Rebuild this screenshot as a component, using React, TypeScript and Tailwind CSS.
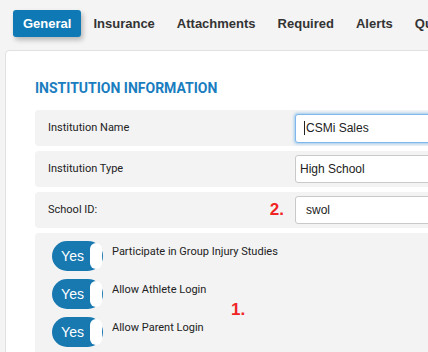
const tabs = ['Insurance', 'Attachments', 'Required', 'Alerts', 'Quick'];

const toggles = [
  'Participate in Group Injury Studies',
  'Allow Athlete Login',
  'Allow Parent Login',
];

function YesToggle() {
  return (
    <div className="relative flex h-[30px] w-[51px] shrink-0 items-center rounded-full bg-[#1878b0]">
      <span className="w-[41px] text-center font-['Liberation_Sans',sans-serif] text-[14px] text-white">
        Yes
      </span>
      <span className="absolute right-[1px] top-[2px] h-[26px] w-[12px] rounded-full bg-white" />
    </div>
  );
}

function FieldRow({
  label,
  children,
  marker,
}: {
  label: string;
  children: React.ReactNode;
  marker?: string;
}) {
  return (
    <div className="flex h-[36px] items-center rounded-[4px] bg-[#f3f3f3]">
      <div className="flex w-[260px] shrink-0 items-center justify-between pl-[13px] pr-[11px]">
        <span className="text-[11px] text-[#222]">{label}</span>
        {marker ? (
          <span className="font-['Liberation_Sans',sans-serif] text-[17px] font-bold text-[#f02424]">
            {marker}
          </span>
        ) : null}
      </div>
      {children}
    </div>
  );
}

export default function App() {
  return (
    <div className="h-[352px] w-[428px] overflow-hidden bg-[#f4f4f4] font-['Roboto',sans-serif]">
      <div className="flex h-[50px] items-start whitespace-nowrap pl-[13px] pt-[10px] font-['Liberation_Sans',sans-serif] text-[13px] font-bold">
        <div className="mr-px flex h-[27px] items-center rounded-[3px] bg-[#0e79b5] px-[10px] text-white shadow-[2px_3px_5px_rgba(0,0,0,0.25)]">
          General
        </div>
        {tabs.map((tab) => (
          <div key={tab} className="flex h-[27px] items-center px-[11px] text-[#333]">
            {tab}
          </div>
        ))}
      </div>

      <div className="ml-[5px] w-[460px] rounded-[4px] border border-[#e1e1e1] bg-white pb-[40px] pl-[29px] pt-[29px]">
        <h2 className="mb-[14px] text-[14px] font-bold uppercase leading-[16px] text-[#1a7dbf]">
          Institution Information
        </h2>

        <div className="flex flex-col gap-[5px]">
          <FieldRow label="Institution Name">
            <div className="flex h-[29px] w-[200px] items-center rounded-[3px] border border-[#7fb6ec] bg-white pl-[8px] font-['Liberation_Sans',sans-serif] text-[12px] text-[#222] shadow-[0_0_3px_1px_rgba(102,175,233,0.6)]">
              <span className="mr-[1px] h-[14px] w-px bg-[#222]" />
              CSMi Sales
            </div>
          </FieldRow>
          <FieldRow label="Institution Type">
            <div className="flex h-[28px] w-[200px] items-center rounded-[3px] border border-[#c9c9c9] bg-white pl-[4px] font-['Liberation_Sans',sans-serif] text-[12px] text-[#222]">
              High School
            </div>
          </FieldRow>
          <FieldRow label="School ID:" marker="2.">
            <div className="flex h-[28px] w-[200px] items-center rounded-[3px] border border-[#c9c9c9] bg-white pl-[10px] font-['Liberation_Sans',sans-serif] text-[12px] text-[#222]">
              swol
            </div>
          </FieldRow>

          <div className="relative flex flex-col gap-[8px] rounded-[4px] bg-[#f3f3f3] pb-[20px] pl-[17px] pt-[8px]">
            {toggles.map((t) => (
              <div key={t} className="flex items-start gap-[9px]">
                <YesToggle />
                <span className="pt-[3px] text-[11px] text-[#222]">{t}</span>
              </div>
            ))}
            <span className="absolute left-[196px] top-[64px] font-['Liberation_Sans',sans-serif] text-[17px] font-bold text-[#f02424]">
              1.
            </span>
          </div>
        </div>
      </div>
    </div>
  );
}
